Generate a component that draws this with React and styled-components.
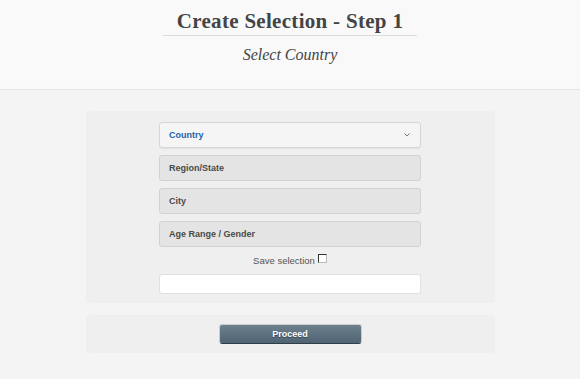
import React from "react";
import styled, { createGlobalStyle } from "styled-components";

const Global = createGlobalStyle`
  html, body { margin: 0; padding: 0; background: #f4f4f4; }
  body { font-family: "Liberation Sans", Arial, sans-serif; }
`;

const Page = styled.div`
  width: 580px;
  min-height: 379px;
  background: #f4f4f4;
`;

const Header = styled.header`
  background: #f9f9f9;
  border-bottom: 1px solid #e6e6e6;
  display: flex;
  flex-direction: column;
  align-items: center;
  padding-top: 10px;
  box-sizing: content-box;
  height: 79px;
`;

const Title = styled.h1`
  margin: 0;
  padding: 0 14px 3px;
  font-family: "Liberation Serif", Georgia, serif;
  font-weight: bold;
  font-size: 21px;
  line-height: 22px;
  color: #444;
  border-bottom: 1px solid #dcdcdc;
  letter-spacing: 0.3px;
`;

const Subtitle = styled.h2`
  margin: 10px 0 0;
  font-family: "Liberation Serif", Georgia, serif;
  font-style: italic;
  font-weight: normal;
  font-size: 16px;
  line-height: 18px;
  color: #444;
`;

const Main = styled.main`
  display: flex;
  flex-direction: column;
  align-items: center;
  gap: 12px;
  padding-top: 21px;
`;

const Panel = styled.section`
  width: 409px;
  background: #efefef;
  border-radius: 4px;
  display: flex;
  flex-direction: column;
  align-items: center;
  padding: ${(p) => p.$pad};
  box-sizing: border-box;
`;

const Fields = styled.div`
  width: 262px;
  display: flex;
  flex-direction: column;
  gap: 7px;
`;

const Field = styled.div`
  height: 26px;
  box-sizing: border-box;
  border: 1px solid ${(p) => (p.$active ? "#d6d6d6" : "#d2d2d2")};
  border-radius: 3px;
  background: ${(p) => (p.$active ? "#f5f5f5" : "#e4e4e4")};
  box-shadow: ${(p) => (p.$active ? "0 1px 1px rgba(0,0,0,0.05)" : "none")};
  display: flex;
  align-items: center;
  justify-content: space-between;
  padding: 0 10px 0 9px;
  font-size: 9px;
  font-weight: bold;
  color: ${(p) => (p.$active ? "#1f5fa5" : "#4a4a4a")};
`;

const Chevron = styled.svg`
  width: 6px;
  height: 4px;
`;

const SaveRow = styled.label`
  display: flex;
  align-items: center;
  justify-content: center;
  gap: 3px;
  font-size: 9.5px;
  color: #555;
  height: 13px;
`;

const Check = styled.span`
  width: 7px;
  height: 7px;
  border-top: 1px solid #333;
  border-left: 1px solid #333;
  border-right: 1px solid #bbb;
  border-bottom: 1px solid #bbb;
  background: #fff;
  margin-top: -5px;
`;

const TextInput = styled.div`
  height: 20px;
  box-sizing: border-box;
  background: #fff;
  border: 1px solid #e0e0e0;
  border-radius: 3px;
`;

const Button = styled.button`
  width: 141px;
  height: 18px;
  border: none;
  border-radius: 2px;
  background: linear-gradient(#6c808e, #4f6373);
  box-shadow: 0 1px 0 #2f3f4a, 0 0 0 1px rgba(0, 0, 0, 0.15);
  color: #fff;
  font-family: "Liberation Sans", Arial, sans-serif;
  font-weight: bold;
  font-size: 9px;
  text-shadow: 0 1px 1px rgba(0, 0, 0, 0.4);
  padding: 0;
  cursor: pointer;
`;

export default function App() {
  return (
    <Page>
      <Global />
      <Header>
        <Title>Create Selection - Step 1</Title>
        <Subtitle>Select Country</Subtitle>
      </Header>
      <Main>
        <Panel $pad="11px 0 9px">
          <Fields>
            <Field $active>
              Country
              <Chevron viewBox="0 0 6 4">
                <path d="M0.5 0.5 L3 3 L5.5 0.5" fill="none" stroke="#777" strokeWidth="1" />
              </Chevron>
            </Field>
            <Field>Region/State</Field>
            <Field>City</Field>
            <Field>Age Range / Gender</Field>
            <SaveRow>
              Save selection <Check />
            </SaveRow>
            <TextInput />
          </Fields>
        </Panel>
        <Panel $pad="10px 0 10px">
          <Button>Proceed</Button>
        </Panel>
      </Main>
    </Page>
  );
}
